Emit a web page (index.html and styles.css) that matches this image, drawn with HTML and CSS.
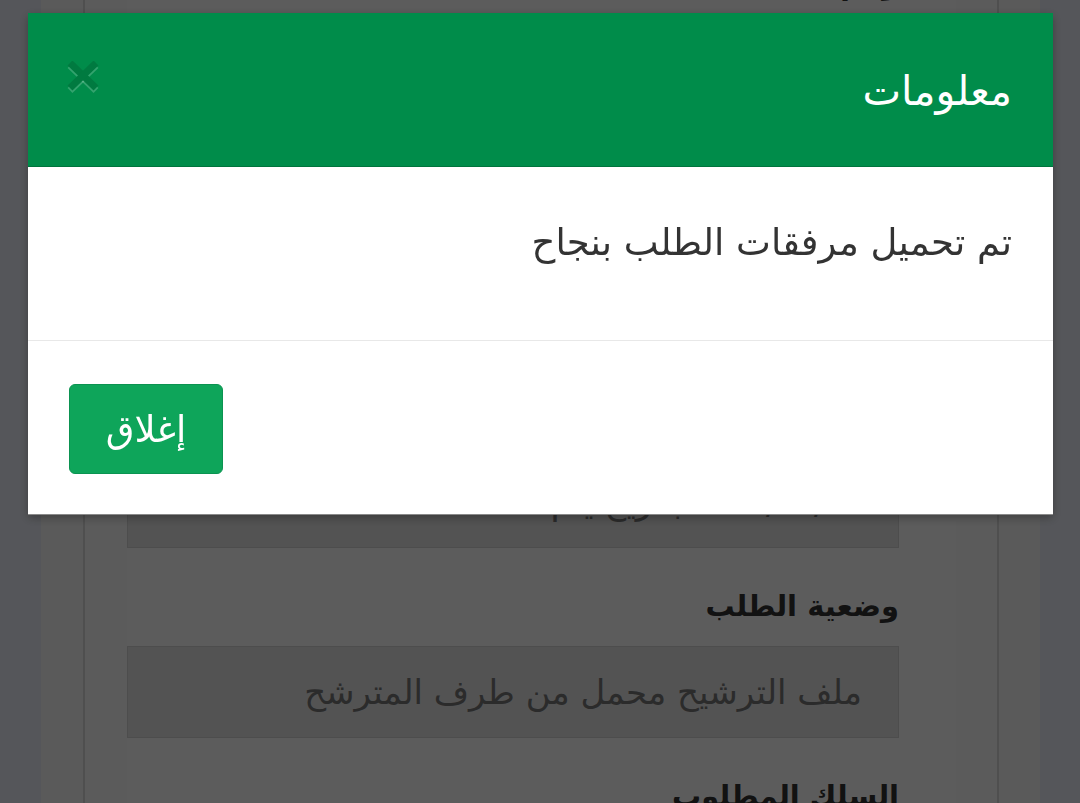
FILE: index.html
```html
<!DOCTYPE html>
<html lang="ar" dir="rtl">
<head>
<meta charset="utf-8">
<title>معلومات</title>
<link rel="stylesheet" href="styles.css">
</head>
<body>
<div class="container">
  <div class="panel">
    <div class="form">
      <div class="group first">
        <label class="label">رقم الطلب</label>
        <div class="field tall">ملف الترشيح</div>
      </div>
      <div class="group">
        <label class="label">تاريخ الطلب</label>
        <div class="field">٢٠٢٠/٠٣/١٢ بتاريخ يتم</div>
      </div>
      <div class="group">
        <label class="label">وضعية الطلب</label>
        <div class="field">ملف الترشيح محمل من طرف المترشح</div>
      </div>
      <div class="group">
        <label class="label">السلك المطلوب</label>
        <div class="field">أستاذ التعليم الابتدائي</div>
      </div>
    </div>
  </div>
</div>

<div class="backdrop"></div>

<div class="modal">
  <div class="modal-header">
    <h4 class="modal-title">معلومات</h4>
    <button class="close" type="button" aria-label="Close">
      <svg width="32" height="34" viewBox="0 0 32 34">
        <g stroke="rgba(255,255,255,0.2)" stroke-width="7" stroke-linecap="butt">
          <line x1="3" y1="4.5" x2="29" y2="29.5"/>
          <line x1="29" y1="4.5" x2="3" y2="29.5"/>
        </g>
        <g stroke="#007a40" stroke-width="7" stroke-linecap="butt">
          <line x1="3" y1="2" x2="29" y2="27"/>
          <line x1="29" y1="2" x2="3" y2="27"/>
        </g>
      </svg>
    </button>
  </div>
  <div class="modal-body">
    <p class="message">تم تحميل مرفقات الطلب بنجاح</p>
  </div>
  <div class="modal-footer">
    <button class="btn" type="button">إغلاق</button>
  </div>
</div>
</body>
</html>
```

FILE: styles.css
```css
* { box-sizing: border-box; }

html, body {
  margin: 0;
  height: 100%;
  overflow: hidden;
}

body {
  background: #eceff8;
  font-family: "DejaVu Sans", "Noto Sans", sans-serif;
  padding: 0 40px 0 41px;
}

.container {
  background: #fafafa;
  height: 100%;
  padding: 0 41px 0 42px;
}

.panel {
  background: #fdfdfd;
  border-left: 2px solid #dcdcdc;
  border-right: 2px solid #dcdcdc;
  height: 100%;
  padding: 0 41px 0 42px;
}

.form {
  display: flow-root;
  background: #ffffff;
  height: 100%;
  padding: 0 57px 0 0;
}

.group {
  padding-top: 36px;
}

.group.first {
  padding-top: 0;
  margin-top: -38px;
}

.label {
  display: block;
  font-weight: bold;
  font-size: 29px;
  line-height: 44px;
  color: #333333;
  margin-bottom: 18px;
}

.field {
  height: 92px;
  background: #e6e6e6;
  border: 1px solid #d6d6d6;
  padding: 0 36px;
  font-size: 34px;
  line-height: 90px;
  color: #777777;
  white-space: nowrap;
  overflow: hidden;
}

.field.tall {
  height: 334px;
}

.backdrop {
  position: fixed;
  inset: 0;
  background: rgba(0, 0, 0, 0.64);
}

.modal {
  position: fixed;
  top: 13px;
  left: 28px;
  width: 1025px;
  background: #ffffff;
  border-bottom: 1px solid #8a8a8a;
  box-shadow: 0 3px 9px rgba(0, 0, 0, 0.3);
}

.modal-header {
  height: 154px;
  background: #008c4a;
  border-bottom: 1px solid #00743d;
  display: flex;
  align-items: center;
  justify-content: space-between;
  padding: 0 41px;
}

.modal-title {
  margin: 0;
  color: #ffffff;
  font-weight: normal;
  font-size: 41px;
  line-height: 1.2;
  padding-top: 4px;
}

.close {
  background: none;
  border: 0;
  padding: 0;
  margin: 0 0 0 -2px;
  align-self: flex-start;
  margin-top: 48px;
  width: 32px;
  height: 34px;
  cursor: pointer;
}

.close svg {
  display: block;
}

.modal-body {
  height: 173px;
  padding: 50px 41px 0;
}

.message {
  margin: 0;
  font-size: 37px;
  line-height: 1.4;
  color: #333333;
}

.modal-footer {
  height: 174px;
  border-top: 1px solid #e8e8e8;
  padding: 43px 41px 0;
  text-align: left;
}

.btn {
  width: 154px;
  height: 90px;
  background: #0ea55a;
  border: 1px solid #0b9351;
  border-radius: 6px;
  color: #ffffff;
  font-family: "DejaVu Sans", "Noto Sans", sans-serif;
  font-size: 37px;
  padding: 0;
  cursor: pointer;
}
```
